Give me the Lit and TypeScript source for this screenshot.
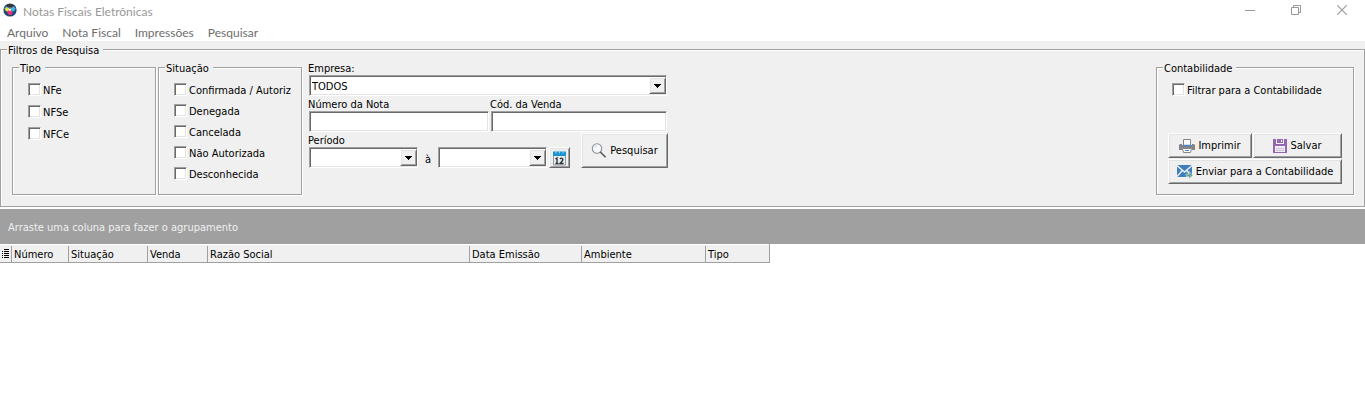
import { LitElement, html, css, svg } from "lit";
import { customElement } from "lit/decorators.js";

const appIcon = svg`<svg width="14" height="18" viewBox="0 0 14 18" aria-hidden="true">
  <circle cx="7" cy="7" r="6.600" fill="#1f4876"/>
  <path d="M1 6A6.600 6.600 0 0 1 13 6L7 8z" fill="#6b9ac8"/>
  <path d="M3 2.500Q7 -.5 11 2.500L9 4.500H5z" fill="#39352f"/>
  <circle cx="4.300" cy="6.500" r="2.100" fill="#f2e23c"/>
  <circle cx="9.800" cy="6.500" r="2.100" fill="#39b8e8"/>
  <circle cx="7" cy="9.500" r="2.500" fill="#ee2f7b"/>
  <circle cx="7" cy="7" r="1" fill="#fff"/>
</svg>`;

const searchIcon = svg`<svg width="16" height="16" viewBox="0 0 16 16" aria-hidden="true">
  <circle cx="6" cy="5.500" r="4.700" fill="#f8fafd" stroke="#8c9096" stroke-width="1.100"/>
  <path d="M3.500 5Q4 3 6 2.800" fill="none" stroke="#c9d3e2"/>
  <path d="M9.300 9L14.600 14.300" stroke="#555" stroke-width="1.600"/>
</svg>`;

const calendarIcon = svg`<svg width="15" height="16" viewBox="0 0 15 16" aria-hidden="true">
  <rect x="1" y="2" width="13" height="13.500" rx="1" fill="#8e9aa3"/>
  <rect x="2" y="6" width="11" height="8.500" fill="#e6eaed"/>
  <rect x="1" y="1.500" width="13" height="4.500" fill="#1a94cf"/>
  <path d="M4 .5v3M7.500 .5v3M11 .5v3" stroke="#9fd0ea"/>
  <path d="M3.500 9l1.500-1v5.500M3.500 13.500h3M8 9q1-1.300 2.300-.5q1.200 1.200-.3 2.700l-2 2.300H11.500" fill="none" stroke="#26323a" stroke-width="1.300"/>
</svg>`;

const printIcon = svg`<svg width="16" height="14" viewBox="0 0 16 14" aria-hidden="true">
  <path d="M4.500 6V.5h7V6" fill="#fff" stroke="#858585"/>
  <path d="M1 5h2v1h10V5h2l1 1v5h-3V9H3v2H0V6z" fill="#858585"/>
  <path d="M4 6.500h8" stroke="#4a86c6" stroke-width="1.500"/>
  <path d="M3.500 9.500h9l-1 4h-7z" fill="#fff" stroke="#858585"/>
  <path d="M6 11.500h4" stroke="#4a86c6"/>
</svg>`;

const saveIcon = svg`<svg width="14" height="14" viewBox="0 0 14 14" aria-hidden="true">
  <path d="M0 0h14v14H0z" fill="#9467b4"/>
  <path d="M3 0h8v5H3z" fill="#f0f0f0"/>
  <path d="M4 0h6v4H4z" fill="#9467b4"/>
  <path d="M8 1h1v2H8z" fill="#fff"/>
  <path d="M2 7h10v6H2z" fill="#f0f0f0"/>
  <path d="M3 9.500h8M3 11.500h8" stroke="#cdbbdb"/>
</svg>`;

const mailIcon = svg`<svg width="16" height="14" viewBox="0 0 16 14" aria-hidden="true">
  <path d="M0 0h15v12H0z" fill="#3f7fbe"/>
  <path d="M0 .5L7.500 7L15 .5M0 11.500L5.300 5.500M15 11.500L9.700 5.500" fill="none" stroke="#f0f0f0" stroke-width="1.400"/>
  <path d="M9 9h3V6.500l4 3.700-4 3.800v-2.500H9z" fill="#6aa693" stroke="#f0f0f0" stroke-width=".5"/>
</svg>`;

const gridIcon = svg`<svg width="7" height="10" viewBox="0 0 7 10" aria-hidden="true" shape-rendering="crispEdges">
  <path d="M2 .5h5M2 2.500h5M2 4.500h5M2 6.500h5M2 8.500h5M0 2.500h1M0 4.500h1M0 6.500h1M0 8.500h1" stroke="#000"/>
</svg>`;

const arrow = svg`<svg width="7" height="4" viewBox="0 0 7 4" aria-hidden="true" shape-rendering="crispEdges"><path d="M0 0h7v1H6v1H5v1H4v1H3V3H2V2H1V1H0z"/></svg>`;

@customElement("app-root")
export class AppRoot extends LitElement {
  static styles = css`
    :host {
      display: block;
      min-height: 100vh;
      background: #fff;
      color: #000;
      font-family: "DejaVu Sans Condensed", "DejaVu Sans", sans-serif;
      font-stretch: condensed;
      font-size: 11px;
      line-height: 16px;
    }
    *, *::before { box-sizing: border-box; }
    svg { display: block; flex: none; }
    button, input, select { font: inherit; color: inherit; margin: 0; border-radius: 0; }

    .titlebar, .menu {
      display: flex;
      align-items: center;
      font-family: Lato, "Open Sans", sans-serif;
      font-stretch: normal;
      font-size: 12px;
    }
    .titlebar { height: 24px; padding-left: 3px; gap: 6px; color: #999; }
    .title { flex: 1; margin: 0; font: inherit; }
    .window { display: flex; height: 20px; align-self: flex-start; }
    .window button {
      width: 46px; padding: 0; border: 0; background: none;
      display: grid; place-items: center;
    }
    .menu { height: 17px; padding-left: 7px; gap: 14px; }
    .menu a { color: #6d6d6d; text-decoration: none; }

    .panel { background: #f0f0f0; padding: 2px 0 1px; }
    fieldset {
      margin: 0; min-width: 0;
      border: 1px solid #a0a0a0;
      box-shadow: 1px 1px 0 #fff, inset 1px 1px 0 #fff;
    }
    legend { margin-left: -5px; padding: 0 4px 0 1px; height: 13px; line-height: 15px; background: #f0f0f0; }
    .filters { padding: 5px 10px 11px 11px; }
    .row { display: flex; align-items: stretch; gap: 2px; }
    .group { width: 144px; height: 134px; padding: 9px 10px 0 15px; }
    .group legend { margin-left: -9px; }
    .checks { display: grid; gap: 8px; }
    .checks.tight { gap: 7px; }
    .check { display: flex; gap: 2px; height: 14px; white-space: nowrap; }
    .check input {
      appearance: none; flex: none; width: 13px; height: 13px; background: #fff;
    }
    .check input, .field {
      border: 1px solid; border-color: #a0a0a0 #fff #fff #a0a0a0;
      box-shadow: inset 1px 1px 0 #696969, inset -1px -1px 0 #e3e3e3;
    }
    .check input:checked { background: #555 content-box; padding: 3px; }

    .fields { width: 359px; margin-left: 5px; display: grid; gap: 1px; align-content: start; }
    .cell { display: grid; flex: 1; min-width: 0; }
    .cell label { height: 14px; margin-left: -1px; }
    .field { appearance: none; width: 100%; height: 21px; padding: 2px 2px 0; background: #fff; outline: 0; }
    .pair { display: grid; grid-template-columns: 180px 176px; gap: 2px; }
    .combo { position: relative; display: block; }
    .combo .drop {
      position: absolute; top: 2px; right: 1px; width: 17px; height: 17px;
      display: grid; place-items: center; pointer-events: none;
    }
    .wide { width: 358px; }
    .period { display: flex; align-items: flex-end; }
    .date { width: 109px; }
    .to { width: 20px; text-align: center; }
    .button, .combo .drop {
      background: #f0f0f0;
      border: 1px solid; border-color: #fff #696969 #696969 #fff;
      box-shadow: inset 1px 1px 0 #e3e3e3, inset -1px -1px 0 #a0a0a0;
    }
    .button { display: flex; align-items: center; justify-content: center; gap: 3px; padding: 0; height: 25px; white-space: nowrap; }
    .calendar { width: 21px; height: 21px; margin-left: 2px; }
    .search { width: 87px; height: 35px; margin-left: 11px; }

    .accounting { width: 198px; margin-left: auto; padding: 9px 11px 10px; }
    .accounting .check { margin-left: 4px; }
    .actions { display: grid; grid-template-columns: 84px 1fr; gap: 1px; margin-top: 36px; }
    .send { grid-column: 1 / -1; }

    .grouping { background: #a0a0a0; color: #f0f0f0; border-top: 1px solid #fff; height: 36px; padding: 11px 8px; }
    table { width: 770px; table-layout: fixed; border-collapse: separate; border-spacing: 0; background: #f0f0f0; border-right: 1px solid #a0a0a0; }
    th { padding: 1px 0 0; text-align: left; font-weight: normal; border-top: 1px solid #fff; border-bottom: 1px solid #a0a0a0; }
    th span { display: block; height: 16px; line-height: 18px; padding-left: 2px; border-right: 1px solid #a0a0a0; }
    th:last-child span { border-right: 0; }
    th .mark { padding-top: 3px; }
    .c0 { width: 12px; } .c1 { width: 57px; } .c2 { width: 79px; } .c3 { width: 60px; }
    .c4 { width: 262px; } .c5 { width: 112px; } .c6 { width: 124px; }
  `;

  private check(id: string, text: string) {
    return html`<label class="check" for=${id}><input type="checkbox" id=${id} />${text}</label>`;
  }

  render() {
    return html`
      <header class="titlebar">
        ${appIcon}
        <h1 class="title">Notas Fiscais Eletrônicas</h1>
        <div class="window">
          <button aria-label="Minimizar"><svg width="10" height="11" viewBox="0 0 10 11"><path d="M0 5.500h10" stroke="#999" /></svg></button>
          <button aria-label="Restaurar"><svg width="10" height="10" viewBox="0 0 10 10" fill="none" stroke="#999"><path d="M.5 2.500h7v7h-7zM2.500 2.500v-2h7v7h-2" /></svg></button>
          <button aria-label="Fechar"><svg width="10" height="10" viewBox="0 0 10 10"><path d="M0 0l10 10M10 0L0 10" stroke="#999" stroke-width="1.100" /></svg></button>
        </div>
      </header>
      <nav class="menu">
        ${["Arquivo", "Nota Fiscal", "Impressões", "Pesquisar"].map((m) => html`<a href="#">${m}</a>`)}
      </nav>
      <main>
        <section class="panel">
          <fieldset class="filters">
            <legend>Filtros de Pesquisa</legend>
            <div class="row">
              <fieldset class="group">
                <legend>Tipo</legend>
                <div class="checks">${["NFe", "NFSe", "NFCe"].map((t) => this.check(t, t))}</div>
              </fieldset>
              <fieldset class="group">
                <legend>Situação</legend>
                <div class="checks tight">
                  ${["Confirmada / Autoriz", "Denegada", "Cancelada", "Não Autorizada", "Desconhecida"].map((t, i) => this.check("situacao" + i, t))}
                </div>
              </fieldset>
              <div class="fields">
                <div class="cell wide">
                  <label for="empresa">Empresa:</label>
                  <span class="combo"><select class="field" id="empresa"><option>TODOS</option></select><span class="drop">${arrow}</span></span>
                </div>
                <div class="pair">
                  <div class="cell"><label for="nota">Número da Nota</label><input class="field" id="nota" /></div>
                  <div class="cell"><label for="venda">Cód. da Venda</label><input class="field" id="venda" /></div>
                </div>
                <div class="period">
                  <div class="cell">
                    <label for="inicio">Período</label>
                    <span class="combo date"><select class="field" id="inicio"><option></option></select><span class="drop">${arrow}</span></span>
                  </div>
                  <label class="to" for="fim">à</label>
                  <span class="combo date"><select class="field" id="fim"><option></option></select><span class="drop">${arrow}</span></span>
                  <button class="button calendar" aria-label="Calendário">${calendarIcon}</button>
                  <button class="button search">${searchIcon}Pesquisar</button>
                </div>
              </div>
              <fieldset class="accounting">
                <legend>Contabilidade</legend>
                ${this.check("contabilidade", "Filtrar para a Contabilidade")}
                <div class="actions">
                  <button class="button">${printIcon}Imprimir</button>
                  <button class="button">${saveIcon}Salvar</button>
                  <button class="button send">${mailIcon}Enviar para a Contabilidade</button>
                </div>
              </fieldset>
            </div>
          </fieldset>
        </section>
        <div class="grouping">Arraste uma coluna para fazer o agrupamento</div>
        <table>
          <thead>
            <tr>
              <th class="c0"><span class="mark">${gridIcon}</span></th>
              ${["Número", "Situação", "Venda", "Razão Social", "Data Emissão", "Ambiente", "Tipo"].map(
                (h, i) => html`<th class="c${i + 1}" scope="col"><span>${h}</span></th>`
              )}
            </tr>
          </thead>
        </table>
      </main>
    `;
  }
}
